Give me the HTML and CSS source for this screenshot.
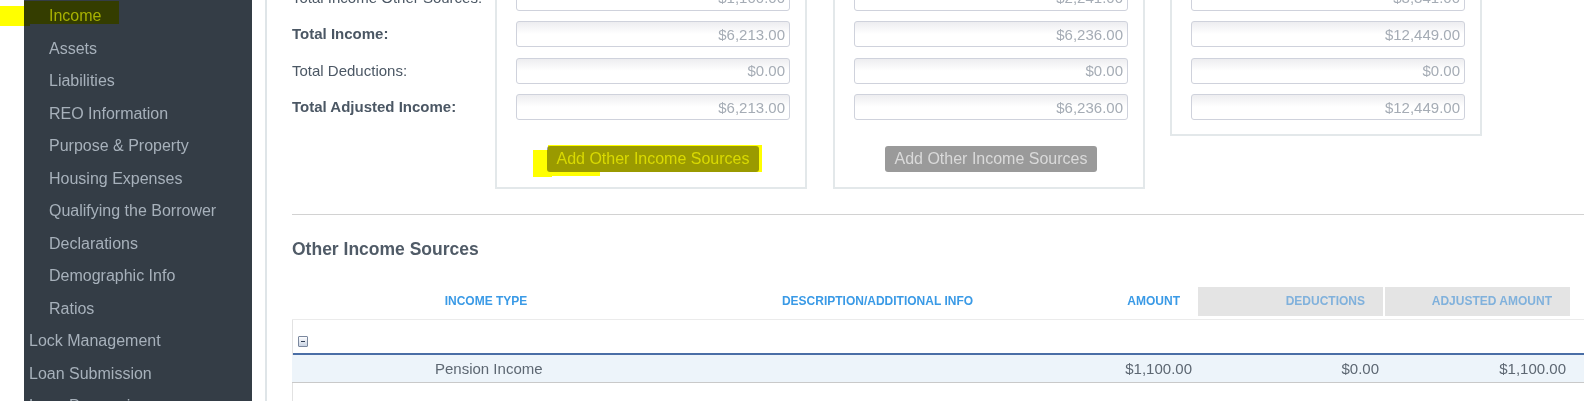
FILE: index.html
```html
<!DOCTYPE html>
<html lang="en">
<head>
  <meta charset="UTF-8" />
  <meta name="viewport" content="width=device-width, initial-scale=1.0"/>
  <title>Income</title>
  <link rel="stylesheet" href="styles.css">
</head>
<body>

  <div class="layout">
    <nav class="sidebar">
      <ul class="nav">
        <li class="nav-item sub">Income</li>
        <li class="nav-item sub">Assets</li>
        <li class="nav-item sub">Liabilities</li>
        <li class="nav-item sub">REO Information</li>
        <li class="nav-item sub">Purpose &amp; Property</li>
        <li class="nav-item sub">Housing Expenses</li>
        <li class="nav-item sub">Qualifying the Borrower</li>
        <li class="nav-item sub">Declarations</li>
        <li class="nav-item sub">Demographic Info</li>
        <li class="nav-item sub">Ratios</li>
        <li class="nav-item">Lock Management</li>
        <li class="nav-item">Loan Submission</li>
        <li class="nav-item">Loan Processing</li>
      </ul>
    </nav>

    <main class="main">
      <section class="totals">
        <div class="labels">
          <div class="label-row">Total Income Other Sources:</div>
          <div class="label-row strong">Total Income:</div>
          <div class="label-row">Total Deductions:</div>
          <div class="label-row strong">Total Adjusted Income:</div>
        </div>

        <div class="income-box">
          <input class="amount-field" value="$1,100.00" readonly>
          <input class="amount-field" value="$6,213.00" readonly>
          <input class="amount-field" value="$0.00" readonly>
          <input class="amount-field" value="$6,213.00" readonly>
          <button class="btn-add">Add Other Income Sources</button>
        </div>

        <div class="income-box">
          <input class="amount-field" value="$2,241.00" readonly>
          <input class="amount-field" value="$6,236.00" readonly>
          <input class="amount-field" value="$0.00" readonly>
          <input class="amount-field" value="$6,236.00" readonly>
          <button class="btn-add">Add Other Income Sources</button>
        </div>

        <div class="income-box">
          <input class="amount-field" value="$3,341.00" readonly>
          <input class="amount-field" value="$12,449.00" readonly>
          <input class="amount-field" value="$0.00" readonly>
          <input class="amount-field" value="$12,449.00" readonly>
        </div>
      </section>

      <hr class="divider">

      <h2 class="section-title">Other Income Sources</h2>

      <div class="grid">
        <div class="grid-head">
          <div class="th"></div>
          <div class="th center">INCOME TYPE</div>
          <div class="th center">DESCRIPTION/ADDITIONAL INFO</div>
          <div class="th right">AMOUNT</div>
          <div class="th right shaded">DEDUCTIONS</div>
          <div class="th right shaded">ADJUSTED AMOUNT</div>
          <div class="th"></div>
        </div>
        <div class="grid-body">
          <div class="group-row">
            <span class="collapse-icon"></span>
          </div>
          <div class="data-row">
            <div class="td"></div>
            <div class="td type">Pension Income</div>
            <div class="td"></div>
            <div class="td right">$1,100.00</div>
            <div class="td right">$0.00</div>
            <div class="td right">$1,100.00</div>
            <div class="td"></div>
          </div>
        </div>
      </div>
    </main>
  </div>

  <!-- highlighter marks drawn over the screenshot -->
  <span class="mark mark-nav-a"></span>
  <span class="mark mark-nav-b"></span>
  <span class="mark mark-btn-a"></span>
  <span class="mark mark-btn-b"></span>
  <span class="mark mark-btn-c"></span>

</body>
</html>
```

FILE: styles.css
```css
body {
  margin: 0;
  height: 401px;
  overflow: hidden;
  font-family: "Liberation Sans", Arial, sans-serif;
  background-color: white;
  color: #4b5764;
}

.layout {
  display: flex;
  height: 401px;
  padding-left: 24px;
}

/* sidebar */
.sidebar {
  width: 228px;
  flex-shrink: 0;
  background-color: #343d46;
}

.nav {
  list-style: none;
  margin: 0;
  padding: 0;
}

.nav-item {
  height: 32.5px;
  line-height: 32.5px;
  padding-left: 5px;
  font-size: 16px;
  color: #a7b1bb;
  white-space: nowrap;
}

.nav-item.sub {
  padding-left: 25px;
}

/* main area */
.main {
  flex: 1;
  margin-left: 13px;
  border-left: 2px solid #dfe5e8;
  padding-left: 25px;
  min-width: 0;
}

.totals {
  display: flex;
  align-items: flex-start;
  margin-top: -30px;
}

.labels {
  width: 203px;
  padding-top: 14.5px;
  font-size: 15px;
}

.label-row {
  height: 26px;
  line-height: 26px;
  margin-bottom: 10.5px;
  white-space: nowrap;
}

.label-row.strong {
  font-weight: bold;
}

.income-box {
  width: 312px;
  box-sizing: border-box;
  border: 2px solid #e3e8ea;
  padding: 12.5px 15px 14px 19px;
  margin-right: 26px;
}

.income-box:nth-child(3) {
  margin-right: 25px;
}

.amount-field {
  display: block;
  width: 274px;
  height: 26px;
  box-sizing: border-box;
  margin: 0 0 10.5px 0;
  padding: 0 4px 0 0;
  border: 1px solid #cfd2dc;
  border-radius: 3px;
  background: linear-gradient(#ededf0, #ffffff 50%);
  font-family: "Liberation Sans", Arial, sans-serif;
  font-size: 15px;
  color: #a5acb5;
  text-align: right;
  outline: none;
}

.amount-field:nth-of-type(4) {
  margin-bottom: 0;
}

.btn-add {
  display: block;
  width: 212px;
  height: 26px;
  margin: 25.5px auto 1px;
  padding: 0;
  border: none;
  border-radius: 3px;
  background-color: #9a9a9a;
  color: #dadada;
  font-family: "Liberation Sans", Arial, sans-serif;
  font-size: 16px;
}

.divider {
  margin: 25.5px 0 0 0;
  border: none;
  border-top: 1px solid #d2d2d2;
}

.section-title {
  margin: 23.5px 0 0 0;
  font-size: 17.5px;
  line-height: 20px;
  color: #505b67;
}

/* grid */
.grid {
  margin-top: 28.5px;
}

.grid-head,
.data-row {
  display: grid;
  grid-template-columns: 28px 332px 451px 95px 187px 187px 1fr;
}

.grid-head {
  padding-bottom: 3px;
  border-bottom: 1px solid #ebebeb;
}

.th {
  height: 29px;
  line-height: 29px;
  font-size: 12px;
  font-weight: bold;
  color: #3a9ae6;
  white-space: nowrap;
}

.th.center {
  text-align: center;
}

.th.right {
  text-align: right;
  padding-right: 18px;
}

.th.shaded {
  background-color: #e4e4e4;
  border-right: 2px solid white;
  color: #80b1dc;
}

.grid-body {
  border-left: 1px solid #e2e2e2;
  height: 100px;
}

.group-row {
  height: 35px;
  box-sizing: border-box;
  padding: 16px 0 0 5px;
  border-bottom: 2px solid #4a6ea6;
}

.collapse-icon {
  display: block;
  position: relative;
  width: 10px;
  height: 11px;
  box-sizing: border-box;
  border: 1px solid #7b889e;
  border-radius: 1px;
  background: linear-gradient(#fdfdfe, #c9d3e3);
}

.collapse-icon::after {
  content: "";
  position: absolute;
  left: 2px;
  top: 4px;
  width: 4px;
  height: 1px;
  background-color: #2f3d55;
}

.data-row {
  margin-left: -1px;
  height: 27px;
  line-height: 27px;
  background-color: #edf4fa;
  border-bottom: 1px solid #c9c9c9;
  font-size: 15px;
  color: #5d6772;
}

.td.type {
  padding-left: 115px;
}

.td.right {
  text-align: right;
  padding-right: 6px;
}

/* yellow highlighter strokes */
.mark {
  position: absolute;
  background-color: #ffff00;
  mix-blend-mode: multiply;
}

.mark-nav-a {
  left: 0;
  top: 6px;
  width: 30px;
  height: 20px;
}

.mark-nav-b {
  left: 24px;
  top: 1px;
  width: 95px;
  height: 23px;
}

.mark-btn-a {
  left: 533px;
  top: 150px;
  width: 19px;
  height: 27px;
}

.mark-btn-b {
  left: 548px;
  top: 145px;
  width: 214px;
  height: 27px;
}

.mark-btn-c {
  left: 552px;
  top: 171px;
  width: 48px;
  height: 5px;
}
```
